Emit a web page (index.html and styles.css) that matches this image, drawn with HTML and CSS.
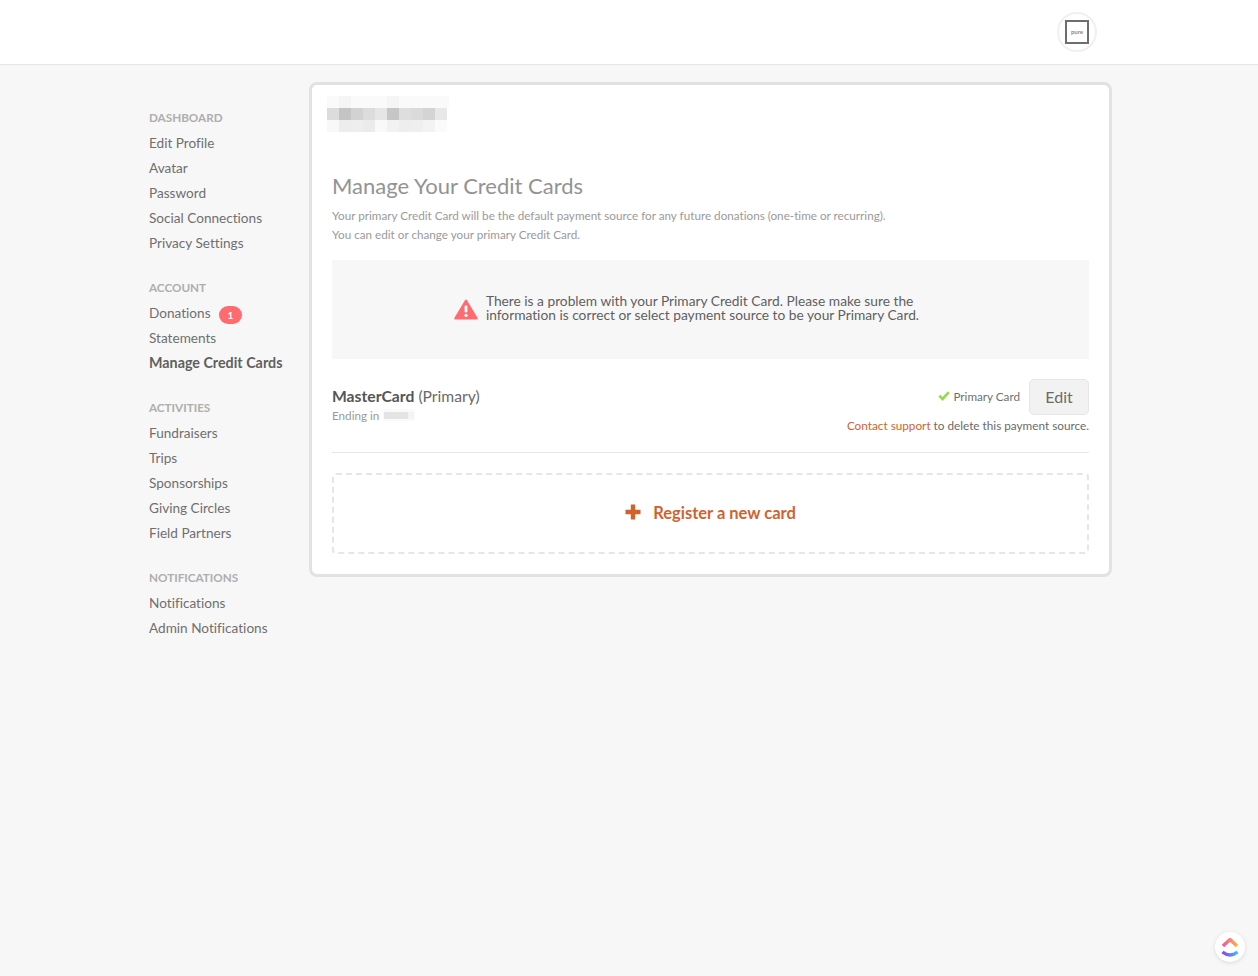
FILE: index.html
```html
<!DOCTYPE html>
<html lang="en">
<head>
<meta charset="utf-8">
<title>Manage Your Credit Cards</title>
<link rel="stylesheet" href="styles.css">
</head>
<body>
<header class="topbar">
  <div class="avatar">
    <div class="avatar-box"><span class="avatar-text">pure</span></div>
  </div>
</header>
<main class="layout">
  <nav class="sidebar">
    <section class="nav-group">
      <h3 class="nav-title">DASHBOARD</h3>
      <a class="nav-link">Edit Profile</a>
      <a class="nav-link">Avatar</a>
      <a class="nav-link">Password</a>
      <a class="nav-link">Social Connections</a>
      <a class="nav-link">Privacy Settings</a>
    </section>
    <section class="nav-group">
      <h3 class="nav-title">ACCOUNT</h3>
      <a class="nav-link">Donations <span class="badge">1</span></a>
      <a class="nav-link">Statements</a>
      <a class="nav-link active">Manage Credit Cards</a>
    </section>
    <section class="nav-group">
      <h3 class="nav-title">ACTIVITIES</h3>
      <a class="nav-link">Fundraisers</a>
      <a class="nav-link">Trips</a>
      <a class="nav-link">Sponsorships</a>
      <a class="nav-link">Giving Circles</a>
      <a class="nav-link">Field Partners</a>
    </section>
    <section class="nav-group">
      <h3 class="nav-title">NOTIFICATIONS</h3>
      <a class="nav-link">Notifications</a>
      <a class="nav-link">Admin Notifications</a>
    </section>
  </nav>
  <section class="panel">
    <svg class="blur-logo" width="122" height="36" viewBox="0 0 122 36" aria-hidden="true">
      <g fill="#fafafa">
        <rect x="0" y="0" width="122" height="12"/>
      </g>
      <g>
        <rect x="0" y="12" width="12" height="12" fill="#dcdcdc"/>
        <rect x="12" y="12" width="12" height="12" fill="#c4c4c4"/>
        <rect x="24" y="12" width="12" height="12" fill="#d2d2d2"/>
        <rect x="36" y="12" width="12" height="12" fill="#dcdcdc"/>
        <rect x="48" y="12" width="12" height="12" fill="#e6e6e6"/>
        <rect x="60" y="12" width="12" height="12" fill="#c6c6c6"/>
        <rect x="72" y="12" width="12" height="12" fill="#dedede"/>
        <rect x="84" y="12" width="12" height="12" fill="#dadada"/>
        <rect x="96" y="12" width="12" height="12" fill="#d4d4d4"/>
        <rect x="108" y="12" width="12" height="12" fill="#e8e8e8"/>
        <rect x="0" y="24" width="12" height="12" fill="#f8f8f8"/>
        <rect x="12" y="24" width="12" height="12" fill="#ededed"/>
        <rect x="24" y="24" width="12" height="12" fill="#eeeeee"/>
        <rect x="36" y="24" width="12" height="12" fill="#ebebeb"/>
        <rect x="48" y="24" width="12" height="12" fill="#f9f9f9"/>
        <rect x="60" y="24" width="12" height="12" fill="#f2f2f2"/>
        <rect x="72" y="24" width="12" height="12" fill="#eeeeee"/>
        <rect x="84" y="24" width="12" height="12" fill="#efefef"/>
        <rect x="96" y="24" width="12" height="12" fill="#f3f3f3"/>
        <rect x="108" y="24" width="12" height="12" fill="#fbfbfb"/>
      </g>
      <g fill="#f5f5f5">
        <rect x="12" y="0" width="12" height="12"/>
        <rect x="60" y="0" width="12" height="12"/>
      </g>
    </svg>
    <h1 class="panel-title">Manage Your Credit Cards</h1>
    <p class="intro">Your primary Credit Card will be the default payment source for any future donations (one-time or recurring).<br>You can edit or change your primary Credit Card.</p>
    <div class="alert">
      <svg class="alert-icon" width="24" height="21" viewBox="0 0 24 21" aria-hidden="true">
        <path d="M12 1.5 L22.8 19.6 H1.2 Z" fill="#ff6b6f" stroke="#ff6b6f" stroke-width="2" stroke-linejoin="round"/>
        <rect x="10.6" y="6.4" width="2.8" height="7.2" rx="1" fill="#fff"/>
        <circle cx="12" cy="16.4" r="1.6" fill="#fff"/>
      </svg>
      <p class="alert-text">There is a problem with your Primary Credit Card. Please make sure the<br>information is correct or select payment source to be your Primary Card.</p>
    </div>
    <div class="card-row">
      <div class="card-info">
        <div class="card-name"><strong>MasterCard</strong> (Primary)</div>
        <div class="card-ending">Ending in
          <svg class="blur-digits" width="32" height="12" viewBox="0 0 32 12" aria-hidden="true">
            <rect x="0" y="0" width="32" height="12" fill="#fafafa"/>
            <rect x="1" y="3" width="24" height="7" fill="#e4e4e4"/>
            <rect x="25" y="3" width="6" height="7" fill="#f3f3f3"/>
          </svg>
        </div>
      </div>
      <div class="card-actions">
        <div class="card-status">
          <svg class="check" width="12" height="10" viewBox="0 0 12 10" aria-hidden="true">
            <path d="M1.3 4.6 L4.6 8 L10.8 1.2" fill="none" stroke="#97d94e" stroke-width="2.6"/>
          </svg>
          <span class="status-label">Primary Card</span>
          <button class="edit-btn" type="button">Edit</button>
        </div>
        <p class="support"><a class="support-link">Contact support</a> to delete this payment source.</p>
      </div>
    </div>
    <a class="register">
      <svg class="plus" width="16" height="16" viewBox="0 0 16 16" aria-hidden="true">
        <path d="M8 .5 V15.5 M.5 8 H15.500" fill="none" stroke="#d1622e" stroke-width="4.400"/>
      </svg>
      <span class="register-label">Register a new card</span>
    </a>
  </section>
</main>
<div class="fab">
  <svg width="22" height="24" viewBox="0 0 22 24" aria-hidden="true">
    <defs>
      <linearGradient id="cu-top" x1="0" x2="1" y1="0" y2="0">
        <stop offset="0" stop-color="#ff4fa3"/>
        <stop offset="1" stop-color="#ffb13b"/>
      </linearGradient>
      <linearGradient id="cu-bottom" x1="0" x2="1" y1="0" y2="0">
        <stop offset="0" stop-color="#8a3ffc"/>
        <stop offset="1" stop-color="#3fb8ff"/>
      </linearGradient>
    </defs>
    <path d="M4 11 L11 4.500 L18 11" fill="none" stroke="url(#cu-top)" stroke-width="3.400" stroke-linejoin="round"/>
    <path d="M3.500 17 Q11 23 18.500 17" fill="none" stroke="url(#cu-bottom)" stroke-width="3.400"/>
  </svg>
</div>
</body>
</html>
```
FILE: styles.css
```css
* { box-sizing: border-box; }
html, body { margin: 0; padding: 0; }
body {
  height: 976px;
  overflow: hidden;
  background: #f7f7f7;
  color: #6a6a6a;
  font-family: "Lato", "Open Sans", sans-serif;
  font-variant-ligatures: none;
  position: relative;
}
.topbar {
  height: 65px;
  background: #fff;
  border-bottom: 1px solid #e6e6e6;
  display: flex;
  justify-content: flex-end;
  align-items: flex-start;
  padding: 12px 161px 0 0;
}
.avatar {
  width: 40px;
  height: 40px;
  border-radius: 50%;
  border: 2px solid #f0f0f0;
  background: #fff;
  display: flex;
  align-items: center;
  justify-content: center;
}
.avatar-box {
  width: 24px;
  height: 24px;
  border: 2px solid #6e6e6e;
  display: flex;
  align-items: center;
  justify-content: center;
}
.avatar-text {
  font-size: 6px;
  line-height: 6px;
  color: #8a8a8a;
  font-weight: 700;
}
.layout {
  display: flex;
  align-items: flex-start;
  padding: 17px 0 0 149px;
}
.sidebar {
  width: 160px;
  padding-top: 23px;
  flex: none;
}
.nav-group { margin-bottom: 20px; }
.nav-title {
  margin: 0;
  font-size: 11.700px;
  line-height: 25px;
  font-weight: 700;
  color: #aeaeae;
}
.nav-link {
  display: block;
  height: 25px;
  padding-top: 1px;
  font-size: 13.600px;
  line-height: 24px;
  color: #6f6f6f;
  white-space: nowrap;
}
.nav-link.active {
  font-size: 14.300px;
  font-weight: 700;
  color: #5f5f5f;
}
.badge {
  display: inline-block;
  width: 23px;
  height: 18px;
  margin-left: 5px;
  border-radius: 9px;
  background: #ff6b6f;
  color: #fff;
  font-size: 10px;
  font-weight: 700;
  line-height: 18px;
  text-align: center;
  vertical-align: -1px;
}
.panel {
  width: 803px;
  height: 495px;
  flex: none;
  background: #fff;
  border: 3px solid #e2e2e2;
  border-radius: 8px;
  padding: 11px 20px 0;
}
.blur-logo {
  display: block;
  margin-left: -5px;
}
.panel-title {
  margin: 36px 0 0;
  font-size: 22px;
  line-height: 36px;
  font-weight: 400;
  color: #939393;
}
.intro {
  margin: 2px 0 0;
  font-size: 11.700px;
  line-height: 19px;
  color: #9a9a9a;
}
.alert {
  margin-top: 16px;
  height: 99px;
  background: #f7f7f7;
  display: flex;
  align-items: center;
  justify-content: center;
  gap: 8px;
  padding-right: 48px;
}
.alert-icon { flex: none; }
.alert-text {
  margin: 0 0 4px;
  font-size: 13.750px;
  line-height: 14px;
  color: #5f5f5f;
}
.card-row {
  display: flex;
  justify-content: space-between;
  height: 94px;
  padding-top: 20px;
  border-bottom: 1px solid #e8e8e8;
}
.card-name {
  font-size: 15.700px;
  line-height: 20px;
  margin-top: 7px;
  color: #6a6a6a;
}
.card-name strong { color: #555; }
.card-ending {
  font-size: 11.700px;
  line-height: 16px;
  margin-top: 1px;
  color: #9a9a9a;
  display: flex;
  align-items: center;
  gap: 4px;
}
.card-actions { text-align: right; }
.card-status {
  display: flex;
  align-items: center;
  justify-content: flex-end;
}
.check { margin: 0 3px 2px 0; }
.status-label {
  margin-bottom: 2px;
  font-size: 11.700px;
  color: #6f6f6f;
}
.edit-btn {
  margin-left: 9px;
  width: 60px;
  height: 36px;
  border: 1px solid #e6e6e6;
  border-radius: 5px;
  background: #f2f2f2;
  color: #6a6a6a;
  font: 400 16px "Lato", sans-serif;
  padding: 0 0 2px;
}
.support {
  margin: 2px 0 0;
  font-size: 11.750px;
  line-height: 17px;
  color: #6a6a6a;
}
.support-link { color: #d1622e; }
.register {
  margin-top: 20px;
  height: 81px;
  border: 2px dashed #e6e6e6;
  border-radius: 4px;
  display: flex;
  align-items: center;
  justify-content: center;
  gap: 12px;
  padding-bottom: 2px;
}
.plus { margin-bottom: 2px; }
.register-label {
  font-size: 16.500px;
  font-weight: 700;
  color: #d1622e;
}
.fab {
  position: absolute;
  left: 1215px;
  top: 932px;
  width: 30px;
  height: 30px;
  border-radius: 50%;
  background: #fff;
  box-shadow: 0 1px 4px rgba(0,0,0,.12);
  display: flex;
  align-items: center;
  justify-content: center;
}
```
